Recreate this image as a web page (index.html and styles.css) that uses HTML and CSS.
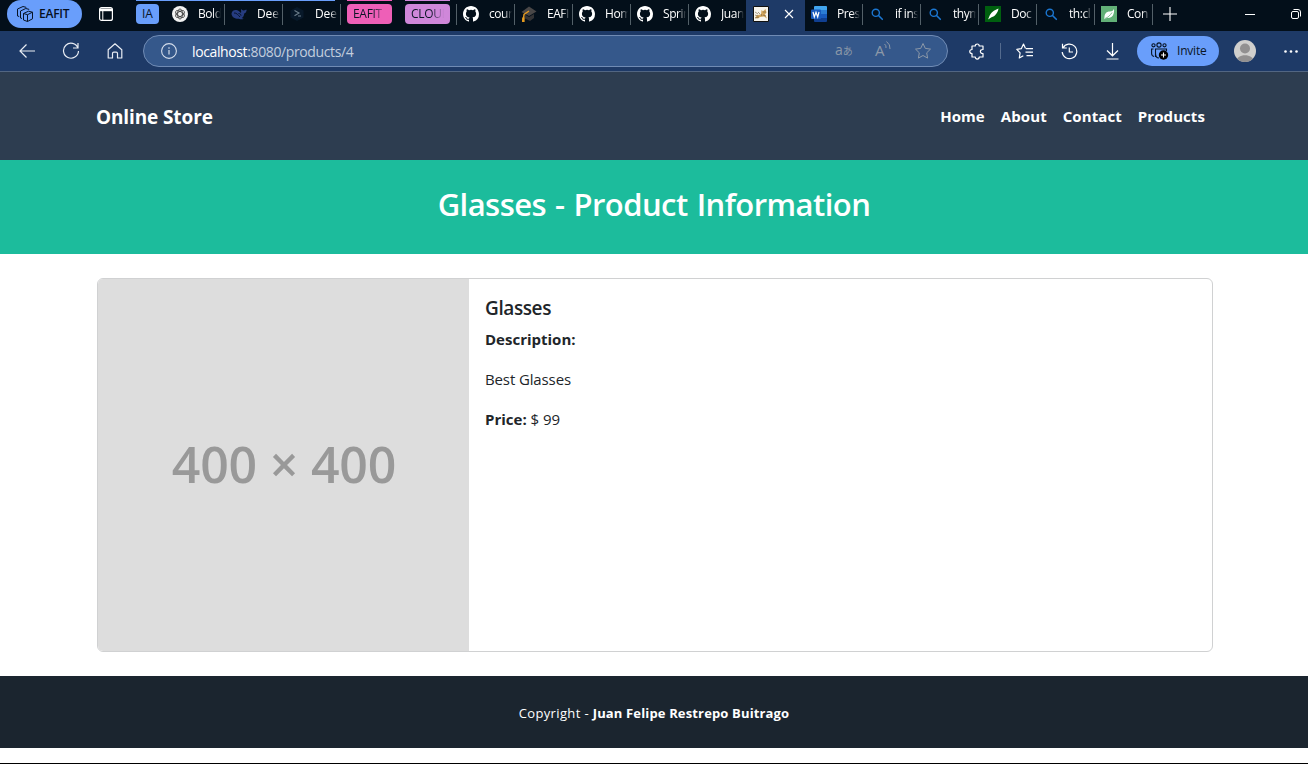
FILE: index.html
```
<!DOCTYPE html>
<html lang="en">
<head>
<meta charset="utf-8">
<title>Glasses - Online Store</title>
<link rel="stylesheet" href="styles.css">
</head>
<body>
<svg class="defs" width="0" height="0">
  <symbol id="github" viewBox="0 0 16 16"><path fill="#fff" d="M8 0C3.58 0 0 3.58 0 8c0 3.54 2.29 6.53 5.47 7.59.4.07.55-.17.55-.38 0-.19-.01-.82-.01-1.49-2.01.37-2.53-.49-2.69-.94-.09-.23-.48-.94-.82-1.13-.28-.15-.68-.52-.01-.53.63-.01 1.08.58 1.23.82.72 1.21 1.87.87 2.33.66.07-.52.28-.87.51-1.07-1.78-.2-3.64-.89-3.64-3.95 0-.87.31-1.59.82-2.15-.08-.2-.36-1.02.08-2.12 0 0 .67-.21 2.2.82a7.4 7.4 0 0 1 4 0c1.53-1.04 2.2-.82 2.2-.82.44 1.1.16 1.92.08 2.12.51.56.82 1.27.82 2.15 0 3.07-1.87 3.75-3.65 3.95.29.25.54.73.54 1.48 0 1.07-.01 1.93-.01 2.2 0 .21.15.46.55.38A8.01 8.01 0 0 0 16 8c0-4.42-3.58-8-8-8z"/></symbol>
  <symbol id="search" viewBox="0 0 16 16"><circle cx="6.8" cy="6.8" r="3.6" fill="none" stroke="#1b76d1" stroke-width="1.4"/><path d="M9.5 9.5l3.8 3.8" stroke="#1b76d1" stroke-width="1.6" stroke-linecap="round"/></symbol>
  <symbol id="star" viewBox="0 0 18 18"><path d="M9 1.5l2.3 4.9 5.2.7-3.8 3.7.9 5.3L9 13.5l-4.6 2.6.9-5.3L1.500 7.100l5.200-.7z" fill="none" stroke="currentColor" stroke-linejoin="round"/></symbol>
</svg>

<div class="tabstrip">
  <div class="workspace">
    <svg width="18" height="18" viewBox="0 0 18 18" fill="none" stroke="#071426" stroke-linejoin="round"><path d="M7.500 8.500l5-2.300 4 1v6.600l-5 2.700-4-1.500zM7.500 8.500l4 1.200 5-2.500M11.500 9.700v6.800M6 13.500l-1.500-.5V6l5.300-2.500 3.400.9M3.200 11.500l-1.700-.5V4l5.500-2.500 3.300.9"/></svg>
    <span>EAFIT</span>
  </div>
  <svg class="panes" width="14" height="14" viewBox="0 0 14 14"><rect x=".6" y=".6" width="12.800" height="12.800" rx="2" fill="none" stroke="#fff" stroke-width="1.200"/><path d="M1 1.500h12v2.700H1z" fill="#fff"/><path d="M3.800 4v9" stroke="#fff"/></svg>
  <div class="group group-ia"><span class="chip blue">IA</span></div>
  <div class="tab first"><svg width="16" height="16" viewBox="0 0 16 16"><circle cx="8" cy="8" r="8" fill="#f2f2f2"/><g fill="none" stroke="#333" stroke-width=".8"><ellipse cx="8" cy="8" rx="2.400" ry="5"/><ellipse cx="8" cy="8" rx="2.400" ry="5" transform="rotate(60 8 8)"/><ellipse cx="8" cy="8" rx="2.400" ry="5" transform="rotate(120 8 8)"/></g></svg><span>Bold</span></div>
  <div class="tab lined"><svg width="16" height="16" viewBox="0 0 16 16"><path d="M.5 7.500C1 4.500 3.500 3.500 5.500 4c2.200.3 3.300 2 4.500 3 .5-1.700-.2-2.500 0-4 1 .8 1.500 1.500 2.800 1.400 1 0 1.700-.7 2.900-.7-.2 2-1 3.300-2.500 3.900-.2 2-.9 3.500-2.400 4.500.7.500 1.200.4 1.800.7-1.800 1-3.400.4-4.700-.1C4.500 13 .5 11.500.5 7.500z" fill="#263c80"/><path d="M3 7c2.500-.5 4.500 2.500 6 4M7.500 7.500c1.500 0 2.500 1 2.500 2.200" fill="none" stroke="#07142e"/></svg><span>Dee</span></div>
  <div class="tab lined"><svg width="16" height="16" viewBox="0 0 16 16"><path d="M8 1l6.500 3.500v7L8 15l-6.500-3.500v-7z" fill="#08192a"/><path d="M5.500 4.500L10 7l-4.500 2.700M9 10h3" fill="none" stroke="#6d7f8c" stroke-width="1.100"/></svg><span>Dee</span></div>
  <div class="group group-eafit"><span class="chip pink"><b>EAFIT</b></span></div>
  <div class="group group-cloud"><span class="chip purple"><b>CLOUD</b></span></div>
  <i class="rule"></i>
  <div class="tab"><svg width="16" height="16"><use href="#github"/></svg><span>coun</span></div>
  <div class="tab"><svg width="16" height="16" viewBox="0 0 16 16"><path d="M8 .5l7.500 5L8 10 .5 6z" fill="#494747"/><path d="M3 8l5 3 5-3v4l-4 3-6-3z" fill="#333335"/><path d="M8 5L3 8.500 2 15" fill="none" stroke="#e59b20" stroke-width="1.400"/><path d="M1.200 11.500h2.400V16H1z" fill="#e59b20"/></svg><span>EAFI</span></div>
  <div class="tab"><svg width="16" height="16"><use href="#github"/></svg><span>Hom</span></div>
  <div class="tab"><svg width="16" height="16"><use href="#github"/></svg><span>Sprin</span></div>
  <div class="tab plain"><svg width="16" height="16"><use href="#github"/></svg><span>Juan</span></div>
  <div class="tab active"><svg width="16" height="16" viewBox="0 0 16 16"><path d="M.5.500h15v15H.5z" fill="#f7f5ed" stroke="#111"/><path d="M2 12c1-2.500 3-3.500 6-3.500L8.500 4l1.500 1.200L12.500 3l1 3.500-1.500 2 2 4-3-2-4 .5-2 1.500z" fill="#d3a55a"/><path d="M2 6l3 2M2 9l3 1M2 12l4-1M5 6l2 2M8 8l1 2M10 6h3M10 9l3 1" stroke="#6d5a3d" stroke-width=".6"/></svg><svg class="close" width="10" height="10" viewBox="0 0 10 10"><path d="M1 1l8 8M9 1L1 9" stroke="#fff" stroke-width="1.100"/></svg></div>
  <div class="tab"><svg width="16" height="16" viewBox="0 0 16 16"><path d="M4 0h11q1 0 1 1v3H3V1q0-1 1-1z" fill="#41a5ee"/><path d="M3 4h13v4H3z" fill="#2b7cd3"/><path d="M3 8h13v4H3z" fill="#185abd"/><path d="M3 12h13v3q0 1-1 1H4q-1 0-1-1z" fill="#103f91"/><rect y="3.500" width="10" height="9.500" rx="1" fill="#185abd"/><path d="M2 6l1.300 5L5 6.300 6.700 11 8 6" fill="none" stroke="#fff" stroke-width="1.200"/></svg><span>Pres</span></div>
  <div class="tab"><svg width="16" height="16"><use href="#search"/></svg><span>if ins</span></div>
  <div class="tab"><svg width="16" height="16"><use href="#search"/></svg><span>thym</span></div>
  <div class="tab"><svg width="16" height="16" viewBox="0 0 16 16"><path d="M0 0h16v16H0z" fill="#005f0f"/><path d="M13.500 2.500c-.5 4-3.500 8-7 8.800L3 13.500l1.300-3C5.500 7 9 4 13.500 2.500z" fill="#fff"/></svg><span>Doc</span></div>
  <div class="tab"><svg width="16" height="16"><use href="#search"/></svg><span>th:cl</span></div>
  <div class="tab"><svg width="16" height="16" viewBox="0 0 16 16"><path d="M0 0h16v16H0z" fill="#62b077"/><path d="M13 3c.5 5-1.500 9-6 9-1.500 0-2 .5-3.500 1.200C3 8 5 5.500 9 5.500c2 0 3-.8 4-2.500z" fill="#fff"/><path d="M4 12.500c3-1 5-3 7-6" stroke="#62b077" stroke-width=".8" fill="none"/></svg><span>Con</span></div>
  <svg class="plus" width="14" height="14" viewBox="0 0 14 14"><path d="M7 0v14M0 7h14" stroke="#fff" stroke-width="1.100"/></svg>
  <svg class="minimize" width="10" height="10" viewBox="0 0 10 10"><path d="M0 5.500h10" stroke="#fff"/></svg>
  <svg class="restore" width="10" height="10" viewBox="0 0 10 10" fill="none" stroke="#fff"><rect x=".5" y="2.500" width="7" height="7" rx="1.500"/><path d="M2.500.5H7q2.500 0 2.500 2.500v4.500"/></svg>
</div>

<div class="toolbar">
  <svg class="back" width="16" height="14" viewBox="0 0 16 14" fill="none" stroke="#e9edf4" stroke-width="1.200"><path d="M16 7H1M7.500.500L1 7l6.500 6.500"/></svg>
  <svg class="reload" width="18" height="18" viewBox="0 0 18 18" fill="none" stroke="#e9edf4" stroke-width="1.200"><path d="M16 6A7.500 7.500 0 1 0 16.500 9M16 1v5h-5"/></svg>
  <svg class="home" width="16" height="16" viewBox="0 0 16 16" fill="none" stroke="#e9edf4" stroke-width="1.200" stroke-linejoin="round"><path d="M1.200 6.700L8 .8l6.800 5.900V15h-4.300v-4.500q0-1.300-1.300-1.300H6.800q-1.300 0-1.300 1.300V15H1.200z"/></svg>
  <div class="address">
    <svg width="16" height="16" viewBox="0 0 16 16"><circle cx="8" cy="8" r="7.400" fill="none" stroke="#d5deec" stroke-width="1.100"/><path d="M8 7v4.500M8 4.300v1.400" stroke="#d5deec" stroke-width="1.200"/></svg>
    <span class="url">localhost<i>:8080/products/4</i></span>
    <span class="translate">a<small>あ</small></span>
    <span class="read">A<svg width="7" height="9" viewBox="0 0 7 9" fill="none" stroke="currentColor"><path d="M.5 3q2 1.500 1.500 4M2.500.5q4 3 3.500 7.500"/></svg></span>
    <svg class="fav" width="18" height="18"><use href="#star"/></svg>
  </div>
  <svg class="puzzle" width="16" height="17" viewBox="0 0 16 17" fill="none" stroke="#fff" stroke-width="1.200" stroke-linejoin="round"><path d="M3 3h3.300C6.200.3 10.200.3 10.200 3H14v3.500c-3.500-.3-3.500 4.300 0 4V14h-3.800c0 2.700-4 2.700-3.900 0H3v-3.500c-3-.2-3-4 0-4z"/></svg>
  <i class="divider"></i>
  <svg class="favs" width="17" height="17" viewBox="0 0 17 17" fill="none" stroke="#fff" stroke-width="1.200" stroke-linejoin="round"><path d="M9.500 5.500L7.500 1 5.300 5.700.8 6.400l3.300 3.500-.8 5.100 4-2.200M10 5.600h7M9.500 9.100H17M10.500 12.600H17"/></svg>
  <svg class="history" width="17" height="17" viewBox="0 0 17 17" fill="none" stroke="#fff" stroke-width="1.200"><path d="M2 5a7.300 7.300 0 1 1-.8 4M1.500.8V5h4.300M8.300 4.500V9H12"/></svg>
  <svg class="download" width="13" height="17" viewBox="0 0 13 17" fill="none" stroke="#fff" stroke-width="1.200"><path d="M6.500 0v12.500M1 7.500l5.500 5.300L12 7.500M.5 16h12"/></svg>
  <div class="invite"><svg width="18" height="18" viewBox="0 0 18 18" fill="none" stroke="#071426" stroke-width="1.100"><circle cx="2.500" cy="3.300" r="1.600"/><circle cx="8" cy="3" r="2.100"/><circle cx="13.500" cy="3.300" r="1.600"/><path d="M2.500 7H.6v4.500q0 2.500 2.500 3M4.500 15V7h8M12.500 7h3v2M4.500 11q0 5 3.500 5"/><circle cx="12.500" cy="13" r="4.700" fill="#000" stroke="none"/><path d="M12.500 10.500v5M10 13h5" stroke="#fff"/></svg><span>Invite</span></div>
  <svg class="avatar" width="22" height="22" viewBox="0 0 22 22"><clipPath id="disc"><circle cx="11" cy="11" r="11"/></clipPath><g clip-path="url(#disc)"><path d="M0 0h22v22H0z" fill="#d0cfcd"/><circle cx="11" cy="8.500" r="5" fill="#929090"/><path d="M2 22c0-9 18-9 18 0z" fill="#929090"/></g></svg>
  <svg class="more" width="14" height="3" viewBox="0 0 14 3" fill="#fff"><circle cx="1.500" cy="1.500" r="1.300"/><circle cx="7" cy="1.500" r="1.300"/><circle cx="12.500" cy="1.500" r="1.300"/></svg>
</div>

<nav class="navbar">
  <a class="brand">Online Store</a>
  <div class="links"><a>Home</a><a>About</a><a>Contact</a><a>Products</a></div>
</nav>
<header class="masthead"><h2>Glasses - Product Information</h2></header>
<main class="content">
  <article class="card">
    <div class="photo"><span>400 × 400</span></div>
    <div class="details">
      <h5>Glasses</h5>
      <p><b>Description:</b></p>
      <p class="value">Best Glasses</p>
      <p><b>Price:</b> $ 99</p>
    </div>
  </article>
</main>
<footer class="copyright"><p>Copyright - <b>Juan Felipe Restrepo Buitrago</b></p></footer>
<div class="taskbar-edge"></div>
</body>
</html>
```
FILE: styles.css
```
* { box-sizing: border-box; }
body { margin: 0; height: 764px; overflow: hidden; display: flex; flex-direction: column; background: #fff; color: #212529; font-family: "Open Sans", "Noto Sans", "Noto Sans CJK JP", sans-serif; font-size: 16px; }
.defs { position: absolute; }
svg { display: block; flex: none; }
h2, h5, p { margin: 0; white-space: nowrap; }

.tabstrip { height: 31px; flex: none; display: flex; align-items: flex-start; background: #030f1a; color: #fff; font-size: 12px; line-height: 16px; }
.workspace { width: 75px; height: 28px; margin-left: 7px; padding-left: 9px; border-radius: 14px; background: #699efb; color: #06101f; display: flex; align-items: center; gap: 5px; }
.workspace span { font-weight: 600; letter-spacing: -.25px; }
.panes { margin: 7px 0 0 17px; }
.group { height: 31px; padding-top: 3px; border-top: 1px solid; }
.group-ia { width: 31px; margin-left: 23px; border-color: #699efb; }
.group-eafit { width: 45px; margin-left: 6px; border-color: #ee5fb7; }
.group-cloud { width: 45px; margin: 0 6px 0 13px; border-color: #cf87da; }
.rule { width: 1px; height: 21px; margin-top: 4px; background: #536068; }
.chip { display: block; height: 20px; border-radius: 4px; padding: 2px 0 0 6px; color: #0a1526; overflow: hidden; letter-spacing: -.2px; }
.chip b { display: block; width: 33px; overflow: hidden; font-weight: 400; letter-spacing: -.3px; -webkit-mask-image: linear-gradient(90deg, #000 60%, transparent); mask-image: linear-gradient(90deg, #000 60%, transparent); }
.blue { width: 23px; background: #699efb; }
.pink { background: #ee5fb7; }
.purple { background: #cf87da; }
.tab { width: 58px; height: 31px; flex: none; padding: 6px 0 0 6px; display: flex; gap: 10px; background: linear-gradient(#536068, #536068) 57px 4px / 1px 21px no-repeat; }
.tab span { width: 23px; overflow: hidden; white-space: nowrap; letter-spacing: -.45px; -webkit-mask-image: linear-gradient(90deg, #000 65%, transparent); mask-image: linear-gradient(90deg, #000 65%, transparent); }
.first { padding-left: 5px; border-top: 1px solid #699efb; padding-top: 5px; background-position: 57px 3px; }
.lined { border-top: 1px solid #699efb; padding-top: 5px; background-position: 57px 3px; }
.tab.lined span { letter-spacing: -.1px; }
.lined + .lined { border-top: 0; padding-top: 6px; background: linear-gradient(#699efb, #699efb) 0 0 / 52px 1px no-repeat, linear-gradient(#536068, #536068) 57px 4px / 1px 21px no-repeat; }
.plain { width: 57px; background: none; }
.active { width: 59px; padding-left: 7px; gap: 15px; background: #1e3a67; }
.close { margin-top: 3px; }
.plus { margin: 7px 0 0 10px; }
.minimize { margin: 9px 0 0 68px; }
.restore { margin: 9px 0 0 36px; }

.toolbar { height: 41px; flex: none; display: flex; align-items: center; background: #1e3a67; border-bottom: 1px solid #526682; color: #fff; }
.back { margin-left: 19px; }
.reload { margin-left: 27px; }
.home { margin-left: 27px; }
.address { width: 805px; height: 32px; margin-left: 20px; padding-left: 17px; display: flex; align-items: center; border: 1px solid #708bb4; border-radius: 16px; background: #35588b; color: #8c98a8; }
.url { width: 643px; margin-left: 15px; font-size: 14px; letter-spacing: -.38px; color: #fff; white-space: nowrap; }
.url i { font-style: normal; color: #c3cede; }
.translate { width: 40px; font-size: 14px; line-height: 16px; white-space: nowrap; position: relative; top: -1px; }
.translate small { font-size: 10px; }
.read { width: 40px; display: flex; font-size: 15px; line-height: 18px; position: relative; top: -1px; }
.read svg { margin-left: -1px; }
.fav { margin-left: -1px; }
.puzzle { margin-left: 21px; }
.divider { width: 1px; height: 16px; margin-left: 15px; background: #546b8e; }
.favs { margin-left: 15px; }
.history { margin-left: 28px; }
.download { margin-left: 28px; }
.invite { width: 82px; height: 30px; margin-left: 18px; padding-left: 14px; border-radius: 15px; background: #699efb; color: #0a1526; display: flex; align-items: center; gap: 8px; font-size: 12px; line-height: 16px; letter-spacing: -.2px; }
.avatar { margin-left: 15px; }
.more { margin-left: 28px; }

.navbar { height: 88px; flex: none; padding: 0 103px 0 96px; display: flex; align-items: center; justify-content: space-between; background: #2d3d50; color: #fff; }
.brand { padding-top: 1px; font-size: 19px; font-weight: 700; line-height: 30px; letter-spacing: -.12px; }
.links { display: flex; gap: 16px; font-size: 15px; font-weight: 700; line-height: 24px; letter-spacing: .08px; }
.masthead { height: 94px; flex: none; padding-top: 24px; background: #1cbc9c; color: #fff; text-align: center; }
.masthead h2 { font-size: 31px; font-weight: 600; line-height: 40px; letter-spacing: -.55px; word-spacing: 1.5px; }
.content { height: 422px; flex: none; padding: 24px 95px 24px 97px; }
.card { height: 374px; display: flex; border: 1px solid #d0d1d2; border-radius: 6px; overflow: hidden; }
.photo { width: 371px; display: flex; align-items: center; justify-content: center; background: #ddd; color: #999; }
.photo span { margin: -2px 0 0 1px; font-size: 50px; font-weight: 600; line-height: 60px; letter-spacing: -.2px; white-space: nowrap; }
.details { padding: 16px; }
.details h5 { height: 31px; font-size: 19px; font-weight: 600; line-height: 26px; letter-spacing: -.4px; }
.details p { height: 40px; font-size: 15px; line-height: 26px; }
.details .value { letter-spacing: -.12px; }
.copyright { height: 72px; flex: none; padding-top: 2px; display: flex; align-items: center; justify-content: center; background: #1b252f; color: #fff; font-size: 13px; line-height: 22px; letter-spacing: .36px; }
.copyright b { letter-spacing: .15px; }
.taskbar-edge { height: 1px; flex: none; margin-top: 15px; background: #000; }
```
